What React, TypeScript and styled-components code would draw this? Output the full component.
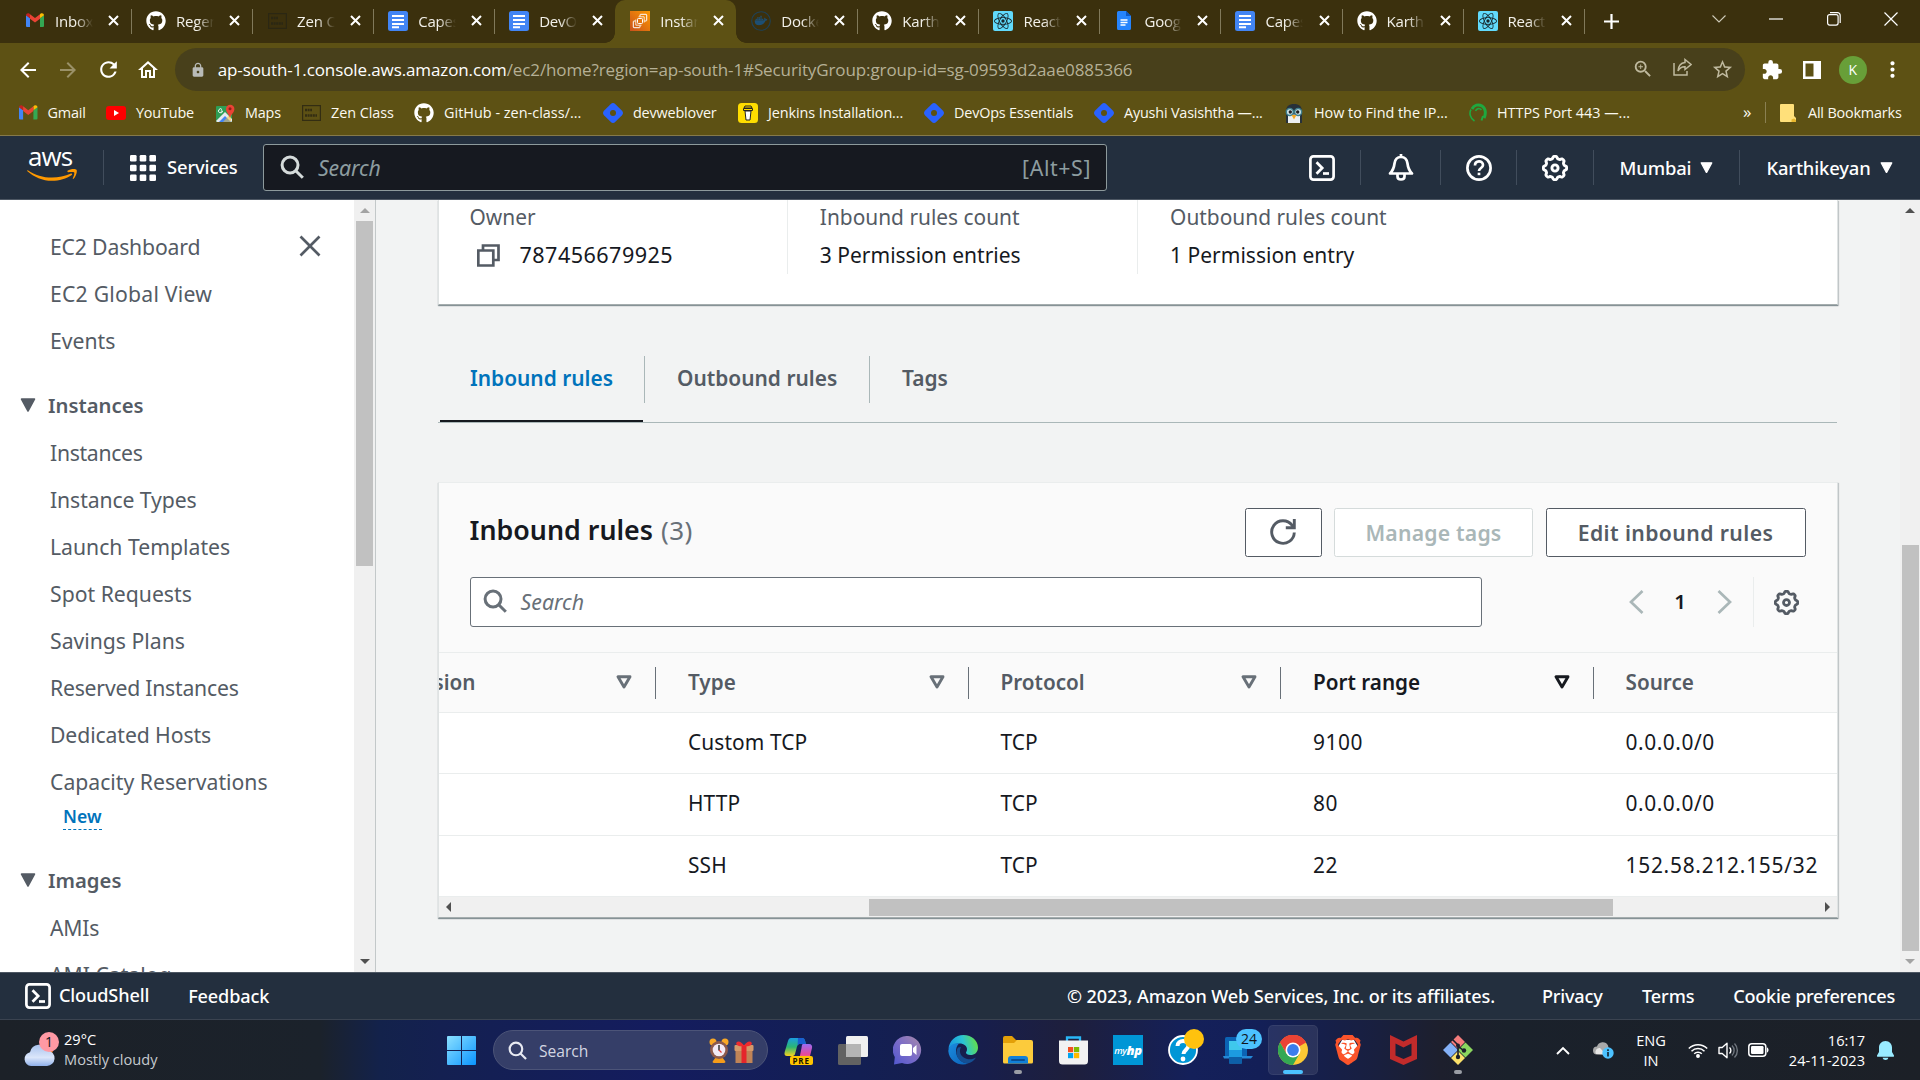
import React from 'react';
import styled, { createGlobalStyle, css } from 'styled-components';
import {
  MdArrowBack, MdArrowForward, MdRefresh, MdOutlineHome, MdLock, MdExtension, MdStarBorder,
  MdOutlineZoomIn, MdMoreVert,
} from 'react-icons/md';
import { FaGithub } from 'react-icons/fa';
import { SiDocker, SiReact, SiBrave } from 'react-icons/si';

const Global = createGlobalStyle`
  * { box-sizing: border-box; }
  body { margin: 0; overflow: hidden; }
  svg { display: block; flex: none; }
`;

const ember = '"Noto Sans", "Open Sans", sans-serif';
const segoe = '"Open Sans", "Noto Sans", sans-serif';

const Screen = styled.div`
  width: 1920px;
  height: 1080px;
  display: flex;
  flex-direction: column;
  overflow: hidden;
  white-space: nowrap;
  font-family: ${ember};
  color: #16191f;
`;

/* ---------- browser ---------- */

const TabStrip = styled.div`
  height: 43px;
  flex: none;
  background: #3b300d;
  display: flex;
  padding-left: 10px;
  font: 15px ${segoe};
  letter-spacing: -0.2px;
  color: #f3f1ea;
`;

const TabBox = styled.div<{ $active?: boolean; $noSep?: boolean }>`
  width: 121.05px;
  flex: none;
  display: flex;
  align-items: center;
  padding: 0 9px 2px 15px;
  position: relative;
  ${p => p.$active ? css`
    background: #5d5114;
    border-radius: 10px 10px 0 0;
    &::before, &::after {
      content: '';
      position: absolute;
      bottom: 0;
      width: 10px;
      height: 10px;
    }
    &::before { left: -10px; background: radial-gradient(circle at 0 0, transparent 9.5px, #5d5114 10px); }
    &::after { right: -10px; background: radial-gradient(circle at 100% 0, transparent 9.5px, #5d5114 10px); }
  ` : !p.$noSep && css`
    &::after {
      content: '';
      position: absolute;
      right: -1px;
      top: 9px;
      width: 1px;
      height: 25px;
      background: #81795a;
    }
  `}
`;

const TabIcon = styled.span`
  width: 20px;
  display: flex;
  justify-content: center;
`;

const TabTitle = styled.span`
  width: 38px;
  margin-left: 10px;
  overflow: hidden;
  mask-image: linear-gradient(90deg, #000 55%, transparent 100%);
`;

const TabClose = styled.span`
  margin-left: auto;
  display: flex;
  padding-right: 3px;
`;

const NewTab = styled.div`
  width: 54px;
  display: flex;
  align-items: center;
  justify-content: center;
  padding: 0 0 1px 1px;
`;

const WindowButtons = styled.div`
  margin-left: auto;
  display: flex;
  padding-bottom: 5px;
`;

const WindowButton = styled.div`
  width: 57.5px;
  display: flex;
  align-items: center;
  justify-content: center;
`;

const AddressRow = styled.div`
  height: 53px;
  flex: none;
  background: #5d5114;
  display: flex;
  align-items: center;
  padding-left: 8px;
  color: #fff;
`;

const ToolButton = styled.span<{ $w?: number; $dim?: boolean }>`
  width: ${p => p.$w ?? 40}px;
  display: flex;
  justify-content: center;
  color: ${p => (p.$dim ? '#9a9168' : '#fff')};
`;

const UrlBar = styled.div`
  width: 1570px;
  height: 43px;
  margin-left: 6.7px;
  border-radius: 22px;
  background: #48401b;
  display: flex;
  align-items: center;
  padding: 0 2px 0 15px;
  font: 17px ${segoe};
  letter-spacing: -0.11px;
  color: #b5b096;
`;

const Url = styled.span`
  margin-left: 12px;
  padding-bottom: 1px;
  b { font-weight: 400; color: #fff; }
`;

const UrlActions = styled.span`
  margin-left: auto;
  display: flex;
  color: #bfb99e;
`;

const Avatar = styled.span`
  width: 28px;
  height: 28px;
  border-radius: 50%;
  background: #689f38;
  display: flex;
  align-items: center;
  justify-content: center;
  font: 14px ${segoe};
`;

const BookmarkRow = styled.div`
  height: 40px;
  flex: none;
  background: #5d5114;
  border-bottom: 1px solid #85794a;
  display: flex;
  align-items: center;
  padding: 0 0 6px 19px;
  font: 14.4px ${segoe};
  letter-spacing: -0.18px;
  color: #fbf9f0;
`;

const Bookmark = styled.span<{ $w: number; $ls?: number }>`
  width: ${p => p.$w}px;
  flex: none;
  display: flex;
  align-items: center;
  gap: 10px;
  letter-spacing: ${p => p.$ls ?? -0.18}px;
`;

const BookmarksMore = styled.span`
  width: 24px;
  margin-left: 86px;
  font-size: 17px;
  padding-bottom: 3px;
`;

const AllBookmarks = styled.span`
  display: flex;
  align-items: center;
  gap: 12px;
  height: 21px;
  border-left: 1px solid #8a8052;
  padding-left: 14px;
  margin-left: -2px;
`;

/* ---------- AWS header ---------- */

const AwsHeader = styled.header`
  height: 64px;
  flex: none;
  background: #232f3e;
  border-bottom: 1px solid #4d5763;
  display: flex;
  align-items: center;
  padding-right: 1px;
  color: #fff;
  font-size: 18.4px;
  font-weight: 500;
  letter-spacing: -0.14px;
`;

const AwsLogo = styled.div`
  width: 103px;
  height: 46px;
  padding-left: 27px;
  display: flex;
  flex-direction: column;
  font: 500 26px/22px "Open Sans", sans-serif;
  letter-spacing: -0.9px;
  span { padding-left: 1px; height: 24px; margin-top: 0; }
`;

const HeaderSep = styled.span`
  width: 1px;
  height: 35px;
  background: #414d5c;
`;

const Services = styled.div`
  width: 159px;
  display: flex;
  align-items: center;
  padding-left: 26px;
  gap: 11px;
  span { padding-bottom: 2px; }
`;

const HeaderSearch = styled.div`
  width: 844px;
  height: 47px;
  border: 1px solid #8d9a9c;
  border-radius: 3px;
  background: #161920;
  display: flex;
  align-items: center;
  padding: 0 15px 1px 16px;
  gap: 14px;
  font-size: 21.3px;
  font-weight: 400;
  color: #8d9da0;
  i { flex: 1; }
  span { letter-spacing: 0.6px; }
`;

const HeaderItem = styled.div<{ $w: number; $first?: boolean }>`
  width: ${p => p.$w}px;
  flex: none;
  margin-left: ${p => (p.$first ? 'auto' : 0)};
  display: flex;
  align-items: center;
  justify-content: center;
  gap: 9px;
`;

/* ---------- body ---------- */

const Body = styled.div`
  height: 772px;
  flex: none;
  display: flex;
  background: #f2f3f3;
`;

const Sidebar = styled.nav`
  width: 354px;
  padding-top: 22.5px;
  background: #fff;
  overflow: hidden;
  font-size: 21.2px;
  color: #545b64;
`;

const NavItem = styled.div<{ $ls?: number }>`
  height: 47px;
  display: flex;
  align-items: center;
  justify-content: space-between;
  padding: 0 33px 0 50px;
  letter-spacing: ${p => p.$ls ?? 0}px;
`;

const NavHeading = styled.div`
  height: 47px;
  margin-top: 18px;
  padding-left: 20px;
  display: flex;
  align-items: center;
  gap: 12px;
  font-weight: 600;
  font-size: 20.3px;
`;

const NewTag = styled.div`
  height: 34px;
  padding-left: 63px;
  display: flex;
  align-items: flex-start;
  span {
    height: 25px;
    line-height: 23px;
    border-bottom: 1.5px dashed #0073bb;
    font-size: 17.6px;
    font-weight: 600;
    color: #0073bb;
  }
`;

const VScroll = styled.div<{ $w: number }>`
  width: ${p => p.$w}px;
  flex: none;
  background: #f0f0f0;
  display: flex;
  flex-direction: column;
  align-items: center;
`;

const ScrollCap = styled.div`
  height: 21px;
  flex: none;
  display: flex;
  align-items: center;
`;

const VThumb = styled.div<{ $top: number; $h: number }>`
  width: 17px;
  height: ${p => p.$h}px;
  margin-top: ${p => p.$top}px;
  margin-bottom: auto;
  background: #c1c1c1;
`;

const Main = styled.main`
  flex: 1;
  border-left: 1px solid #c3c8c9;
  padding-left: 61.5px;
`;

const Card = styled.section`
  width: 1400px;
  background: #fff;
  border: 1px solid #dfe3e3;
  border-top-color: #eaeded;
  border-bottom-color: #a5adae;
  box-shadow: 0 1px 1px rgba(0, 28, 36, 0.35), 1px 1px 1px rgba(0, 28, 36, 0.15);
`;

const DetailsCard = styled(Card)`
  height: 105px;
  border-top: 0;
  display: flex;
  padding-left: 31px;
`;

const Detail = styled.div<{ $last?: boolean }>`
  width: ${p => (p.$last ? 400 : 350.3)}px;
  font-size: 21px;
  color: #16191f;
  height: 74px;
  position: relative;
  ${p => !p.$last && css`
    &::after {
      content: '';
      position: absolute;
      right: 32px;
      top: 0;
      bottom: 0;
      width: 1px;
      background: #eaeded;
    }
  `}
`;

const DetailLabel = styled.div`
  height: 36px;
  line-height: 35px;
  color: #545b64;
  font-size: 20.9px;
`;

const DetailValue = styled.div<{ $wide?: boolean }>`
  height: 38px;
  line-height: 38px;
  display: flex;
  align-items: center;
  gap: 20px;
  padding-left: ${p => (p.$wide ? 7 : 0)}px;
  font-size: ${p => (p.$wide ? 21.6 : 21)}px;
  letter-spacing: ${p => (p.$wide ? 0.45 : 0)}px;
`;

const Tabs = styled.div`
  width: 1399px;
  height: 74px;
  margin-top: 44px;
  display: flex;
  border-bottom: 1px solid #aab7b8;
  font-size: 20.9px;
  font-weight: 600;
  color: #545b64;
`;

const AwsTab = styled.div<{ $w: number; $active?: boolean }>`
  width: ${p => p.$w}px;
  height: 74px;
  position: relative;
  display: flex;
  align-items: center;
  padding: 0 0 17px 32.5px;
  color: ${p => (p.$active ? '#0073bb' : 'inherit')};
  ${p => p.$active && css`
    &::before {
      content: '';
      position: absolute;
      left: 2px;
      right: 1px;
      bottom: 1px;
      height: 2px;
      background: #16191f;
    }
  `}
`;

const TabDivider = styled.span`
  width: 1px;
  height: 47px;
  margin-top: 7px;
  background: #aab7b8;
`;

const RulesCard = styled(Card)`
  height: 436px;
  margin-top: 59px;
  overflow: hidden;
`;

const RulesHead = styled.div`
  height: 170px;
  background: #fafafa;
  border-bottom: 1px solid #eaeded;
  padding: 25px 31px 0 31px;
`;

const TitleRow = styled.div`
  height: 49px;
  display: flex;
  align-items: center;
`;

const Title = styled.h2`
  margin: 0 auto 6px 0;
  font-size: 26.8px;
  font-weight: 600;
  span { font-weight: 400; color: #687078; margin-left: 1px; font-size: 26px; letter-spacing: 0.5px; }
`;

const Button = styled.button<{ $w: number; $off?: boolean }>`
  width: ${p => p.$w}px;
  height: 49px;
  margin-left: 12.5px;
  padding: 0 0 1px;
  display: flex;
  align-items: center;
  justify-content: center;
  background: #fff;
  border: 1.5px solid ${p => (p.$off ? '#d5dbdb' : '#545b64')};
  border-radius: 2.5px;
  color: ${p => (p.$off ? '#aab7b8' : '#545b64')};
  font: 600 21.2px ${ember};
  letter-spacing: ${p => (p.$off ? 0.2 : 0.4)}px;
`;

const FilterRow = styled.div`
  height: 50px;
  margin-top: 20px;
  display: flex;
  align-items: center;
`;

const FilterSearch = styled.div`
  width: 1012px;
  height: 50px;
  background: #fff;
  border: 1px solid #687078;
  border-radius: 3px;
  display: flex;
  align-items: center;
  gap: 14px;
  padding: 0 0 2px 12px;
  font-size: 21.3px;
  font-style: italic;
  color: #687078;
`;

const Pager = styled.div`
  margin-left: auto;
  height: 50px;
  display: flex;
  align-items: center;
  font-size: 20.5px;
  font-weight: 600;
`;

const PageNo = styled.span`
  width: 73px;
  padding-bottom: 2px;
  text-align: center;
`;

const GearSlot = styled.span`
  height: 50px;
  margin-left: 21px;
  padding: 0 7px 0 20px;
  display: flex;
  align-items: center;
  border-left: 1px solid #eaeded;
`;

const TableRow = styled.div<{ $head?: boolean }>`
  height: ${p => (p.$head ? 60 : 61.3)}px;
  display: grid;
  grid-template-columns: 217.5px repeat(3, 312.5px) 1fr;
  align-items: center;
  background: ${p => (p.$head ? '#fafafa' : '#fff')};
  border-bottom: 1px solid #eaeded;
  font-size: 20.9px;
  ${p => p.$head && css`font-size: 20.7px; font-weight: 600; color: #545b64;`}
  &:last-of-type { border-bottom: 0; }
`;

const Cell = styled.div<{ $sorted?: boolean; $ls?: number }>`
  display: flex;
  align-items: center;
  justify-content: space-between;
  padding: 0 23px 2px 32px;
  color: ${p => (p.$sorted ? '#16191f' : 'inherit')};
  letter-spacing: ${p => p.$ls ?? 0}px;
`;

const HeadCell = styled(Cell)`
  height: 32px;
  border-right: 1px solid #687078;
  &:first-child { padding-left: 0; }
  &:last-child { border-right: 0; }
`;

const CutLabel = styled.span`
  width: 37px;
  display: flex;
  justify-content: flex-end;
  overflow: hidden;
`;

const HScroll = styled.div`
  height: 21px;
  background: #f0f0f0;
  display: flex;
  align-items: center;
  padding: 0 7px;
`;

const HThumb = styled.div`
  width: 744px;
  height: 17px;
  margin: 0 auto 0 418.5px;
  background: #c1c1c1;
`;

const Footer = styled.footer`
  height: 48px;
  flex: none;
  background: #232f3e;
  border-top: 1px solid #4d5763;
  border-bottom: 1px solid #3a4350;
  display: flex;
  align-items: center;
  padding: 0 25px;
  color: #fff;
  font-size: 18.1px;
  font-weight: 500;
`;

const FooterItem = styled.span<{ $ml: number; $up?: boolean; $ls?: number }>`
  margin-left: ${p => p.$ml}px;
  padding-bottom: ${p => (p.$up ? 2 : 0)}px;
  letter-spacing: ${p => p.$ls ?? -0.13}px;
`;

const FooterRight = styled.span`
  margin-left: auto;
  display: flex;
`;

/* ---------- taskbar ---------- */

const Taskbar = styled.div`
  height: 60px;
  flex: none;
  display: flex;
  align-items: center;
  background: linear-gradient(90deg, #1c2128 0, #1b222b 320px, #13224b 380px, #142051 440px, #141c5e 660px,
    #131f53 860px, #171e4c 980px, #1e1f3c 1070px, #14205a 1190px, #131f57 1260px, #191f3e 1380px, #1d1f2d 1440px, #1a212b 1510px, #1c2027 1920px);
  color: #fff;
  font: 14.6px ${segoe};
`;

const Weather = styled.div`
  width: 433.5px;
  display: flex;
  align-items: center;
  padding-left: 24px;
  gap: 8px;
  line-height: 20px;
`;

const WeatherText = styled.div`
  margin-top: -3px;
  div + div { color: #c6cacf; }
`;

const BadgeHost = styled.span`
  position: relative;
  display: flex;
`;

const Badge = styled.span<{ $bg: string; $l: number; $t: number; $w: number; $fs?: number }>`
  position: absolute;
  left: ${p => p.$l}px;
  top: ${p => p.$t}px;
  width: ${p => p.$w}px;
  height: 20px;
  border-radius: 10px;
  background: ${p => p.$bg};
  color: #10151c;
  font-size: ${p => p.$fs ?? 13}px;
  line-height: 20px;
  text-align: center;
`;

const TaskSlot = styled.div<{ $active?: boolean }>`
  width: ${p => (p.$active ? 50 : 55)}px;
  margin: ${p => (p.$active ? '0 2.5px' : '0')};
  height: ${p => (p.$active ? 50 : 60)}px;
  flex: none;
  display: flex;
  align-items: center;
  justify-content: center;
  border-radius: 5px;
  background: ${p => (p.$active ? 'rgba(255,255,255,0.09)' : 'none')};
  box-shadow: ${p => (p.$active ? 'inset 0 0 0 1px rgba(255,255,255,0.06)' : 'none')};
  position: relative;
`;

const RunMark = styled.span<{ $on?: boolean }>`
  position: absolute;
  bottom: ${p => (p.$on ? 1 : 6)}px;
  left: 50%;
  transform: translateX(-50%);
  width: ${p => (p.$on ? 20 : 8)}px;
  height: 4px;
  border-radius: 2px;
  background: ${p => (p.$on ? '#4cc2ff' : '#9a9da5')};
`;

const TaskSearch = styled.div`
  width: 275px;
  height: 40px;
  margin: 0 2.5px 0 4.5px;
  border-radius: 20px;
  background: #353e68;
  border: 1px solid #4c5478;
  display: flex;
  align-items: center;
  padding: 0 12px 0 14px;
  gap: 12px;
  font-size: 15.6px;
  color: #d3d6e2;
  span { flex: 1; padding-top: 1px; }
`;

const SearchArt = styled.div`
  display: flex;
  gap: 5px;
  margin-right: 1px;
`;

const Tray = styled.div`
  margin-left: auto;
  padding-right: 15px;
  display: flex;
  align-items: center;
  line-height: 20px;
`;

const TraySlot = styled.div<{ $w: number; $right?: boolean }>`
  width: ${p => p.$w}px;
  display: flex;
  flex-direction: column;
  align-items: ${p => (p.$right ? 'flex-end' : 'center')};
  white-space: pre;
  padding-bottom: ${p => (p.$right ? 1 : 0)}px;
`;

const MyHp = styled.span`
  width: 30px;
  height: 30px;
  background: #0096d6;
  display: flex;
  align-items: center;
  justify-content: center;
  font: italic 600 9.5px "Open Sans", sans-serif;
  letter-spacing: -0.4px;
  color: #fff;
  b { font-size: 13px; }
`;

const PreTag = styled.span`
  position: absolute;
  left: 6px;
  top: 20px;
  width: 23px;
  height: 9px;
  border-radius: 2px;
  background: #ffc400;
  color: #1a1400;
  font: 700 8px/9px "Open Sans", sans-serif;
  letter-spacing: 0.8px;
  padding-left: 3px;
`;

/* ---------- drawings ---------- */

const TabCloseIcon = () => (
  <svg width="11" height="11" viewBox="0 0 11 11"><path d="M1 1l9 9M10 1l-9 9" stroke="#fff" strokeWidth="2" /></svg>
);
const PlusIcon = () => (
  <svg width="15" height="15" viewBox="0 0 15 15"><path d="M7.500 0v15M0 7.500h15" stroke="#fff" strokeWidth="2.200" /></svg>
);
const GmailIcon = ({ s = 18 }: { s?: number }) => (
  <svg width={s} height={s * 0.78} viewBox="0 0 18 14">
    <path d="M0 2v11a1 1 0 0 0 1 1h3V5.2z" fill="#4285f4" />
    <path d="M18 2v11a1 1 0 0 1-1 1h-3V5.2z" fill="#34a853" />
    <path d="M14 5.2V1.2l.7-.6C16 -.4 18 .4 18 2.2z" fill="#fbbc04" />
    <path d="M4 5.2V1.2l-.7-.6C2-.4 0 .4 0 2.2z" fill="#c5221f" />
    <path d="M4 1.2l5 3.8 5-3.8v4.6L9 9.6 4 5.8z" fill="#ea4335" />
  </svg>
);
const GithubIcon = () => <FaGithub size={20} color="#fff" />;
const DocsIcon = () => (
  <svg width="20" height="20" viewBox="0 0 20 20">
    <rect width="20" height="20" rx="2.5" fill="#4285f4" />
    <path d="M4 5h12M4 9h12M4 13h12M4 16.300h7" stroke="#fff" strokeWidth="1.9" />
  </svg>
);
const DocFileIcon = () => (
  <svg width="14" height="19" viewBox="0 0 14 19">
    <path d="M1.500 0H9l5 5v12.500A1.500 1.500 0 0 1 12.500 19h-11A1.500 1.500 0 0 1 0 17.500v-16A1.500 1.500 0 0 1 1.500 0z" fill="#2684fc" />
    <path d="M9 0l5 5H9z" fill="#0b57c4" />
    <path d="M3.500 9h7M3.500 11.500h7M3.500 14h5" stroke="#fff" strokeWidth="1.300" />
  </svg>
);
const ZenIcon = ({ c }: { c: string }) => (
  <svg width="19" height="16" viewBox="0 0 19 16">
    <rect x=".6" y=".6" width="17.800" height="14.800" fill="none" stroke={c} strokeWidth="1.200" />
    <path d="M3 5h7M3 10.500h12" stroke={c} strokeWidth="2.600" strokeDasharray="2 .6" />
  </svg>
);
const Ec2Icon = () => (
  <svg width="20" height="20" viewBox="0 0 20 20">
    <defs><linearGradient id="ec2" x1="0" y1="1" x2="1" y2="0"><stop stopColor="#c8511b" /><stop offset="1" stopColor="#f90" /></linearGradient></defs>
    <rect width="20" height="20" fill="url(#ec2)" />
    <g fill="none" stroke="#fff" strokeWidth="1">
      <rect x="7.500" y="7.500" width="5" height="5" rx=".8" />
      <path d="M5.500 10H4a.7.7 0 0 0-.7.700v5.300a.7.700 0 0 0 .7.700h5.300a.7.700 0 0 0 .7-.7v-1.500" />
      <path d="M10 5.500V4a.7.700 0 0 1 .7-.7H16a.7.700 0 0 1 .7.700v5.300a.7.700 0 0 1-.7.700h-1.500" />
      <path d="M5.800 8.500v5.700h5.700M8.500 5.800h5.700v5.700" strokeWidth=".8" />
    </g>
  </svg>
);
const ReactTile = () => (
  <svg width="20" height="20" viewBox="0 0 20 20">
    <rect width="20" height="20" rx="2" fill="#61dafb" />
    <SiReact x="1" y="1" size={18} color="#17262c" />
  </svg>
);
const DockerTab = () => (
  <svg width="20" height="20" viewBox="0 0 20 20">
    <circle cx="10" cy="10" r="9.300" fill="none" stroke="#1f4156" strokeWidth="1.100" />
    <SiDocker x="3.500" y="3" size={13} color="#1d4f74" />
  </svg>
);
const YoutubeIcon = () => (
  <svg width="20" height="14" viewBox="0 0 20 14"><rect width="20" height="14" rx="3" fill="#f00" /><path d="M8 4l5 3-5 3z" fill="#fff" /></svg>
);
const MapsIcon = () => (
  <svg width="19" height="18" viewBox="0 0 19 18">
    <rect x="0" y="2" width="16" height="16" rx="1" fill="#2e9e55" />
    <path d="M0 17L9 8l7 7v2a1 1 0 0 1-1 1H1z" fill="#e6e9ee" />
    <path d="M3 18l6-6 6 6z" fill="#4285f4" />
    <path d="M7 18L15 9v8l-1 1" fill="#fbc52c" opacity=".5" />
    <path d="M14 14c-.7-4-4-5-4-9a4.200 4.200 0 1 1 8.400 0c0 4-3.600 5-4.400 9z" fill="#ea4335" />
    <circle cx="14" cy="4.800" r="1.500" fill="#8f1f1a" />
    <path d="M6 5.500a2 2 0 1 0 .5 1.500H4.800" fill="none" stroke="#fff" strokeWidth="1" />
  </svg>
);
const HashnodeIcon = () => (
  <svg width="20" height="20" viewBox="0 0 20 20">
    <path d="M7.600 1.200a3.400 3.400 0 0 1 4.800 0l6.400 6.400a3.400 3.400 0 0 1 0 4.800l-6.400 6.400a3.400 3.400 0 0 1-4.800 0L1.200 12.400a3.400 3.400 0 0 1 0-4.800z" fill="#2962ff" />
    <circle cx="10" cy="10" r="3" fill="#5d5114" />
  </svg>
);
const CupIcon = () => (
  <svg width="20" height="20" viewBox="0 0 20 20">
    <rect width="20" height="20" rx="3.500" fill="#ffdd00" />
    <path d="M7 8h6l-1 9H8z" fill="#fff" stroke="#222" strokeWidth="1" />
    <path d="M7 3h6l1 2H6zM5.500 5.500h9V7.500h-9z" fill="#ffdd00" stroke="#222" strokeWidth="1" />
  </svg>
);
const PenguinIcon = () => (
  <svg width="20" height="20" viewBox="0 0 20 20">
    <path d="M2 20V9C2 3 5 1 10 1s8 2 8 8v11z" fill="#27313a" />
    <path d="M4 13c2-2 10-2 12 0v7H4z" fill="#eceff1" />
    <circle cx="5.800" cy="9" r="3.500" fill="#cfe3e8" stroke="#3f7f8c" strokeWidth="1.400" />
    <circle cx="14.200" cy="9" r="3.500" fill="#cfe3e8" stroke="#3f7f8c" strokeWidth="1.400" />
    <circle cx="6.300" cy="9" r="1.700" fill="#222" /><circle cx="13.700" cy="9" r="1.700" fill="#222" />
    <path d="M7.500 12h5L10 16.500z" fill="#f5a623" />
  </svg>
);
const SwirlIcon = () => (
  <svg width="18" height="19" viewBox="0 0 18 19" fill="none" stroke="#1fa83f">
    <path d="M5.500 18C1 15 0 10 2 6.500" strokeWidth="1.600" />
    <path d="M3 6C5 2 9.500.8 13 3c4 2.500 4 8 2 12" strokeWidth="3" />
    <path d="M6.500 8c1-2.500 4-3.500 6-1" strokeWidth="1.600" />
    <path d="M14 13l-1.500 4.500" strokeWidth="2" />
  </svg>
);
const FolderIcon = () => (
  <svg width="16" height="18" viewBox="0 0 16 18">
    <path d="M1 0h12a1 1 0 0 1 1 1v11l2 2v3a1 1 0 0 1-1 1H1a1 1 0 0 1-1-1V1a1 1 0 0 1 1-1z" fill="#ffe07a" />
    <path d="M11.500 18v-2.500l2.500-1 2 1.500v1a1 1 0 0 1-1 1z" fill="#e8b72d" />
  </svg>
);
const ShareIcon = () => (
  <svg width="19" height="18" viewBox="0 0 19 18" fill="none" stroke="#bfb99e" strokeWidth="1.500">
    <path d="M1 5v12h13v-4" /><path d="M12 1.500l6 5-6 5V8.800C8.500 8.600 6.500 10 5 13c.3-4.500 2.500-8 7-8.500z" />
  </svg>
);
const PanelIcon = () => (
  <svg width="18" height="18" viewBox="0 0 18 18"><path d="M0 0h18v18H0zM2.500 2.500v13h8v-13z" fill="#fff" fillRule="evenodd" /></svg>
);
const Smile = () => (
  <svg width="51" height="13" viewBox="0 0 51 13">
    <path d="M.8 1.200C8 6 16 8.600 25 8.600c6.500 0 13-1.500 19-4 1-.4 1.600.7.8 1.300C39.500 9.700 32 11.800 25 11.800 15.500 11.800 7 8 .4 2.200-.1 1.700.2.900.8 1.200z" fill="#ff9900" />
    <path d="M40.500 1.700C43.500-.2 48.500-.3 49.500.8c1 1.200-.3 6.500-3 9-.5.4-.9.100-.7-.4.8-2 2-5 1.400-5.900-.6-.8-4-.5-6-.2-.8 0-1-.9-.7-1.600z" fill="#ff9900" />
  </svg>
);
const GridIcon = () => (
  <svg width="26" height="26" viewBox="0 0 26 26" fill="#fff">
    {[0, 9.700, 19.400].map(y => [0, 9.700, 19.400].map(x => <rect key={x + '-' + y} x={x} y={y} width="6.600" height="6.600" rx="1.300" />))}
  </svg>
);
const SearchIcon = ({ s = 24, w = 2, c = 'currentColor' }: { s?: number; w?: number; c?: string }) => (
  <svg width={s} height={s} viewBox="0 0 16 16" fill="none" stroke={c} strokeWidth={w}>
    <circle cx="6.700" cy="6.700" r="5.300" /><path d="M10.500 10.500l4.700 4.700" />
  </svg>
);
const ShellIcon = () => (
  <svg width="26" height="26" viewBox="0 0 26 26" fill="none" stroke="#fff" strokeWidth="2.700">
    <rect x="1.400" y="1.400" width="23.200" height="23.200" rx="3" /><path d="M7.500 7.300l5.700 5.700-5.700 5.700" /><path d="M14 18.500h6" />
  </svg>
);
const BellIcon = () => (
  <svg width="26" height="27" viewBox="0 0 26 27" fill="none" stroke="#fff" strokeWidth="2.700" strokeLinejoin="round">
    <path d="M13 0v3M2 19.500C5 16.500 6 14 6.500 9.500 7 5.500 9.500 3 13 3s6 2.500 6.500 6.500C20 14 21 16.500 24 19.500z" /><path d="M9.500 20v2.500c0 4 7 4 7 0V20" />
  </svg>
);
const HelpIcon = () => (
  <svg width="26" height="26" viewBox="0 0 26 26" fill="none" stroke="#fff" strokeWidth="2.700">
    <circle cx="13" cy="13" r="11.600" /><path d="M9 10.500c0-5.300 8-5.300 8-.5 0 3-4 3-4 6" /><path d="M13 17.700v2.500" />
  </svg>
);
const gearPath = Array.from({ length: 96 }, (_, i) => {
  const a = (i / 96) * Math.PI * 2;
  const r = 10.6 + 1.1 * Math.tanh(2 * Math.cos(8 * a));
  return (i ? 'L' : 'M') + (13 + r * Math.cos(a)).toFixed(2) + ' ' + (13 + r * Math.sin(a)).toFixed(2);
}).join('') + 'Z';
const GearIcon = ({ c = '#fff', s = 26 }: { c?: string; s?: number }) => (
  <svg width={s} height={s} viewBox="0 0 26 26" fill="none" stroke={c} strokeWidth="2.900" strokeLinejoin="round">
    <path d={gearPath} /><circle cx="13" cy="13" r="3.100" />
  </svg>
);
const DownIcon = ({ s = 13, c = '#fff' }: { s?: number; c?: string }) => (
  <svg width={s} height={s * 0.88} viewBox="0 0 16 14"><path d="M1.500 1h13L8 13z" fill={c} stroke={c} strokeWidth="1.500" strokeLinejoin="round" /></svg>
);
const SortIcon = ({ c = '#687078' }: { c?: string }) => (
  <svg width="16" height="14" viewBox="0 0 16 14"><path d="M2 1.800h12L8 12z" fill="none" stroke={c} strokeWidth="2.900" strokeLinejoin="round" /></svg>
);
const CloseIcon = () => (
  <svg width="22" height="22" viewBox="0 0 22 22"><path d="M1.500 1.500l19 19M20.500 1.500l-19 19" stroke="#545b64" strokeWidth="2.700" /></svg>
);
const CopyIcon = () => (
  <svg width="23" height="23" viewBox="0 0 23 23" fill="none" stroke="#545b64" strokeWidth="2.700">
    <path d="M1.300 6.500h15v15h-15z" /><path d="M6 6V1.500h15.500V16H17" />
  </svg>
);
const RefreshIcon = () => (
  <svg width="26" height="26" viewBox="0 0 26 26" fill="none" stroke="#545b64" strokeWidth="2.900">
    <path d="M24.300 13.500A11.300 11.300 0 1 1 22 6.200L23.500 8.500" /><path d="M24.300 0v8.700h-8.500" />
  </svg>
);
const Angle = ({ flip }: { flip?: boolean }) => (
  <svg width="15" height="24" viewBox="0 0 15 24">
    <path d={flip ? 'M1.500 1L13 12 1.500 23' : 'M13.500 1L2 12l11.500 11'} fill="none" stroke="#aab7b8" strokeWidth="2.700" />
  </svg>
);
const tri = { up: 'M0 6L6 0l6 6z', down: 'M0 0h12L6 6z', left: 'M6 0v12L0 6z', right: 'M0 0v12l6-6z' };
const ScrollArrow = ({ dir, c = '#505050' }: { dir: keyof typeof tri; c?: string }) => {
  const tall = dir === 'left' || dir === 'right';
  return <svg width={tall ? 5 : 10} height={tall ? 10 : 5} viewBox={tall ? '0 0 6 12' : '0 0 12 6'}><path d={tri[dir]} fill={c} /></svg>;
};

const CloudIcon = () => (
  <svg width="32" height="34" viewBox="0 0 32 34">
    <defs><linearGradient id="cl" x1="0" y1="0" x2="0" y2="1"><stop stopColor="#a9c3ee" /><stop offset=".6" stopColor="#dbe6fa" /><stop offset="1" stopColor="#8fb0ea" /></linearGradient></defs>
    <circle cx="23" cy="17" r="6" fill="#f58220" />
    <path d="M7 33a7 7 0 0 1-1-13.800A9.500 9.500 0 0 1 24 17.500 7.800 7.800 0 0 1 23 33z" fill="url(#cl)" />
  </svg>
);
const WindowsIcon = () => (
  <svg width="29" height="29" viewBox="0 0 29 29">
    <defs><linearGradient id="wn" x1="0" y1="0" x2="1" y2="1"><stop stopColor="#8be0ff" /><stop offset="1" stopColor="#0a94ff" /></linearGradient></defs>
    <path d="M1 0h13v14H0V1a1 1 0 0 1 1-1zM15 0h13a1 1 0 0 1 1 1v13H15zM0 15h14v14H1a1 1 0 0 1-1-1zM15 15h14v13a1 1 0 0 1-1 1H15z" fill="url(#wn)" />
  </svg>
);
const AlarmIcon = () => (
  <svg width="20" height="25" viewBox="0 0 20 25">
    <circle cx="4" cy="4" r="3.500" fill="#f9a825" /><circle cx="16" cy="4" r="3.500" fill="#f9a825" />
    <path d="M4 23l3-4h6l3 4c1 1 0 2-1 2H5c-1 0-2-1-1-2z" fill="#f59c1a" />
    <circle cx="10" cy="12" r="9" fill="#8d5a4c" /><circle cx="10" cy="12" r="6.300" fill="#f3eaf5" />
    <path d="M10 7v5.500" fill="none" stroke="#333" strokeWidth="1.500" /><path d="M10 12l2.500 2.500" stroke="#e53935" strokeWidth="1.200" />
  </svg>
);
const GiftIcon = () => (
  <svg width="20" height="25" viewBox="0 0 20 25">
    <rect x="1.500" y="10" width="17" height="15" fill="#c08457" /><rect x=".5" y="7" width="19" height="6" rx="1" fill="#d49a6a" />
    <rect x="7.500" y="7" width="5" height="18" fill="#e5262b" />
    <path d="M10 8C5 9 1 7 2.500 4.500S8 4 10 7.500C12 4 16 2 17.500 4.500S15 9 10 8z" fill="#ef2b2d" />
  </svg>
);
const CopilotIcon = () => (
  <svg width="29" height="29" viewBox="0 0 29 29">
    <defs>
      <linearGradient id="ca" x1="0" y1="0" x2="0" y2="1"><stop stopColor="#1b9de2" /><stop offset=".5" stopColor="#2bb673" /><stop offset="1" stopColor="#f6d21f" /></linearGradient>
      <linearGradient id="cb" x1="0" y1="0" x2="0" y2="1"><stop stopColor="#9b6bf2" /><stop offset=".6" stopColor="#e64a9b" /><stop offset="1" stopColor="#f58b4c" /></linearGradient>
    </defs>
    <path d="M7 2h11c3 0 3 3 4 6h-6c-2 0-2.500 1-3.500 4.500L11 18c-.5 1.500-1.500 2-3 2H3c-2 0-3-1.500-2.300-4L4 5c.6-2 1.500-3 3-3z" fill="url(#ca)" />
    <path d="M14 2h4c3 0 3 3 4 6h-6c-1.500 0-2 .5-2.500 2z" fill="#1a5fd0" />
    <path d="M19 8h6c2.500 0 3.500 2 3 4l-2.500 10c-.5 2-1.500 3-3 3H12c2 0 3-1 3.500-3l2-10C18 9 18 8 19 8z" fill="url(#cb)" />
  </svg>
);
const TaskViewIcon = () => (
  <svg width="30" height="30" viewBox="0 0 30 30">
    <rect x="0" y="9" width="23" height="21" rx="1.500" fill="#626262" /><rect x="8" y="1" width="22" height="21" rx="1.500" fill="#f0f0f0" />
    <path d="M8 9h15v13H8z" fill="#b4b4b4" />
  </svg>
);
const ChatIcon = () => (
  <svg width="30" height="30" viewBox="0 0 30 30">
    <defs><linearGradient id="ch" x1="1" y1="0" x2="0" y2="1"><stop stopColor="#a98aa8" /><stop offset=".5" stopColor="#7b6cc8" /><stop offset="1" stopColor="#5157cf" /></linearGradient></defs>
    <path d="M15 1a14 14 0 1 1-6 27L1 29.500l.8-7.500A14 14 0 0 1 15 1z" fill="url(#ch)" />
    <rect x="7" y="9" width="12" height="12" rx="2" fill="#fff" /><path d="M20 13l3.500-3v10L20 17z" fill="#fff" />
  </svg>
);
const EdgeIcon = () => (
  <svg width="30" height="30" viewBox="0 0 30 30">
    <defs>
      <linearGradient id="ea" x1="0" y1=".5" x2="1" y2=".3"><stop stopColor="#1795e0" /><stop offset=".5" stopColor="#2ac3d6" /><stop offset="1" stopColor="#67e03f" /></linearGradient>
      <linearGradient id="eb" x1="0" y1="0" x2="1" y2="1"><stop stopColor="#1b8ce0" /><stop offset="1" stopColor="#0b62b8" /></linearGradient>
    </defs>
    <path d="M.5 14C1 6 7.500 0 15.500 0 24 0 30 6 30 12.500c0 5-3.500 7.500-7.500 7.500-3 0-4.500-1-4.500-2.200 0-1 1-1.500 1-3.800 0-3-3-5.500-7.500-5.500-5 0-9 2.500-11 5.500z" fill="url(#ea)" />
    <path d="M.3 16C1 10 6 7.800 11.500 8.500c-2.500 1-3.500 5-3.500 7.500 0 6 5 12 12 12.500C13 32 1 27 .3 16z" fill="url(#eb)" />
    <path d="M10 12.500c-4 6 0 15 9.500 16 3.500-.5 6.500-3 8.500-6-4 2.500-9 2.500-13-.5-3-2.500-4-6-2-10z" fill="#154f93" />
  </svg>
);
const ExplorerIcon = () => (
  <svg width="30" height="28" viewBox="0 0 30 28">
    <path d="M0 2a2 2 0 0 1 2-2h7l4 4h15v6H0z" fill="#e3a008" />
    <path d="M0 7h11l3-3h14a2 2 0 0 1 2 2v20a1.500 1.500 0 0 1-1.500 1.500h-27A1.500 1.500 0 0 1 0 26z" fill="#fccb3c" />
    <path d="M5 27.500V23a3 3 0 0 1 3-3h14a3 3 0 0 1 3 3v4.500z" fill="#1180d8" /><rect x="8" y="23" width="14" height="2" rx="1" fill="#0a4f93" />
  </svg>
);
const StoreIcon = () => (
  <svg width="29" height="30" viewBox="0 0 29 30">
    <path d="M8 7V2.500h13V7" fill="none" stroke="#29b6f6" strokeWidth="2.300" />
    <path d="M0 5.500h29V26a3.500 3.500 0 0 1-3.500 3.500h-22A3.500 3.500 0 0 1 0 26z" fill="#f2f2f2" />
    <path d="M9 12h5.200v5.200H9z" fill="#f25022" /><path d="M15 12h5.200v5.200H15z" fill="#7fba00" />
    <path d="M9 18h5.200v5.200H9z" fill="#00a4ef" /><path d="M15 18h5.200v5.200H15z" fill="#ffb900" />
  </svg>
);
const HpHelpIcon = () => (
  <svg width="30" height="30" viewBox="0 0 30 30">
    <circle cx="15" cy="15" r="14" fill="#0096d6" stroke="#fff" strokeWidth="1.800" />
    <path d="M9.500 11c0-6.500 11-6.500 11-.5 0 4-5 4.500-5 8.500" fill="none" stroke="#fff" strokeWidth="4" /><circle cx="15" cy="24" r="2.400" fill="#fff" />
  </svg>
);
const PhoneLinkIcon = () => (
  <svg width="30" height="27" viewBox="0 0 30 27">
    <rect x="2" y="0" width="22" height="20" rx="1.500" fill="#0b63b4" /><path d="M0 19h30l-2 2.500H1z" fill="#2489d8" />
    <rect x="6" y="4" width="13" height="22.500" rx="1" fill="#1c9be0" /><path d="M6 4h13v9H6z" fill="#3fc8ec" /><path d="M6 20h13v6.500H6z" fill="#0d5fa8" />
  </svg>
);
const ChromeIcon = () => (
  <svg width="30" height="30" viewBox="0 0 30 30">
    <circle cx="15" cy="15" r="15" fill="#fcc934" />
    <path d="M15 15L2 7.500A15 15 0 0 1 28 7.500z" fill="#ea4335" /><path d="M15 7.500h13A15 15 0 0 0 2 7.500L8.500 18.800z" fill="#ea4335" />
    <path d="M2 7.500a15 15 0 0 0 13 22.500l6.500-11.200-13 0z" fill="#34a853" />
    <circle cx="15" cy="15" r="7.500" fill="#fff" /><circle cx="15" cy="15" r="5.900" fill="#3b7ded" />
  </svg>
);
const BraveIcon = () => (
  <svg width="26" height="30" viewBox="0 0 26 30">
    <path d="M7 5h12l4 7-4 11-6 4-6-4L3 12z" fill="#fff" />
    <SiBrave x="-2" y="0" size={30} color="#fb542b" />
  </svg>
);
const McAfeeIcon = () => (
  <svg width="27" height="30" viewBox="0 0 27 30">
    <path d="M0 0l13.500 6.500L27 0v24l-13.500 6L0 24zM5.500 8.500v12l8 3.500 8-3.500v-12l-8 4z" fill="#c22b2b" fillRule="evenodd" />
  </svg>
);
const GitIcon = () => (
  <svg width="30" height="30" viewBox="0 0 30 30">
    <path d="M15 0l7 7-7 7-7-7z" fill="#f47c7c" /><path d="M22.500 7.500l7.500 7.500-7.500 7.500L15 15z" fill="#8bd65f" />
    <path d="M7.500 7.500L15 15l-7.500 7.500L0 15z" fill="#84b1f7" /><path d="M15 16l7 7-7 7-7-7z" fill="#fbe16a" />
    <path d="M9.500 4.500l5.500 5.500v12M15 11l6 5" fill="none" stroke="#1b1f2b" strokeWidth="1.600" />
    <circle cx="15" cy="10.500" r="2" fill="#1b1f2b" /><circle cx="21" cy="15.500" r="2.200" fill="#1b1f2b" /><circle cx="15" cy="22" r="2.200" fill="#1b1f2b" />
  </svg>
);
const OneDriveIcon = () => (
  <svg width="21" height="18" viewBox="0 0 21 18">
    <path d="M4 13.500a4 4 0 0 1 0-8A6 6 0 0 1 15 4.500l2 9z" fill="#a9a9a9" /><path d="M3 13a4 4 0 0 1 4-6l6 6.500z" fill="#e6e6e6" />
    <circle cx="15" cy="12" r="5.700" fill="#4cc2ff" /><path d="M15 8.300v1.800M15 11v4.500" stroke="#10202c" strokeWidth="1.600" />
  </svg>
);
const WifiIcon = () => (
  <svg width="20" height="15" viewBox="0 0 20 15" fill="none" stroke="#fff" strokeWidth="1.500">
    <path d="M.8 5.500a13 13 0 0 1 18.400 0M3.500 8.200a9.200 9.200 0 0 1 13 0M6.200 10.800a5.400 5.400 0 0 1 7.600 0" /><circle cx="10" cy="13" r="1.200" fill="#fff" />
  </svg>
);
const SpeakerIcon = () => (
  <svg width="21" height="17" viewBox="0 0 21 17" fill="none" stroke="#fff" strokeWidth="1.400">
    <path d="M1 5.500h3.200L9 1.300v14.400l-4.800-4.200H1z" strokeLinejoin="round" /><path d="M11.500 5.500a4 4 0 0 1 0 6" />
    <path d="M14 3.500a7 7 0 0 1 0 10M16.500 1.500a10 10 0 0 1 0 14" stroke="#6f757d" />
  </svg>
);
const BatteryIcon = () => (
  <svg width="21" height="14" viewBox="0 0 21 14">
    <rect x=".8" y=".8" width="17" height="12.400" rx="3" fill="none" stroke="#fff" strokeWidth="1.500" /><rect x="3" y="3" width="12.500" height="8" rx="1.200" fill="#fff" />
    <path d="M19 4.500c2 .5 2 4.500 0 5z" fill="#fff" />
  </svg>
);
const TrayBell = () => (
  <svg width="17" height="19" viewBox="0 0 17 19" fill="#99ebff">
    <path d="M8.500 0c4 0 6.500 3 6.500 6.500V11l2 3.500c.2.800-.2 1.200-1 1.200H1c-.8 0-1.200-.4-1-1.200L2 11V6.500C2 3 4.500 0 8.500 0z" /><path d="M5.700 16.700h5.600c-.3 3-5.300 3-5.600 0z" />
  </svg>
);

/* ---------- data ---------- */

const tabs: { icon: React.ReactNode; title: string; active?: boolean; noSep?: boolean }[] = [
  { icon: <GmailIcon />, title: 'Inbox (' },
  { icon: <GithubIcon />, title: 'Regene' },
  { icon: <ZenIcon c="#2b2713" />, title: 'Zen Cla' },
  { icon: <DocsIcon />, title: 'Capest' },
  { icon: <DocsIcon />, title: 'DevOp', noSep: true },
  { icon: <Ec2Icon />, title: 'Instan', active: true },
  { icon: <DockerTab />, title: 'Docker' },
  { icon: <GithubIcon />, title: 'Karthik' },
  { icon: <ReactTile />, title: 'React A' },
  { icon: <DocFileIcon />, title: 'Google' },
  { icon: <DocsIcon />, title: 'Capest' },
  { icon: <GithubIcon />, title: 'Karthik' },
  { icon: <ReactTile />, title: 'React A' },
];

const bookmarks: { icon: React.ReactNode; label: string; w: number; ls?: number }[] = [
  { icon: <GmailIcon s={18.5} />, label: 'Gmail', w: 87 },
  { icon: <YoutubeIcon />, label: 'YouTube', w: 110 },
  { icon: <MapsIcon />, label: 'Maps', w: 86 },
  { icon: <ZenIcon c="#332d12" />, label: 'Zen Class', w: 112, ls: -0.05 },
  { icon: <GithubIcon />, label: 'GitHub - zen-class/...', w: 189, ls: 0.03 },
  { icon: <HashnodeIcon />, label: 'devweblover', w: 135 },
  { icon: <CupIcon />, label: 'Jenkins Installation...', w: 186, ls: -0.08 },
  { icon: <HashnodeIcon />, label: 'DevOps Essentials', w: 170 },
  { icon: <HashnodeIcon />, label: 'Ayushi Vasishtha —...', w: 190 },
  { icon: <PenguinIcon />, label: 'How to Find the IP...', w: 185, ls: -0.01 },
  { icon: <SwirlIcon />, label: 'HTTPS Port 443 —...', w: 188, ls: 0 },
];

const instanceLinks: [string, number?][] = [
  ['Instances', -0.3], ['Instance Types', -0.1], ['Launch Templates'], ['Spot Requests'],
  ['Savings Plans'], ['Reserved Instances', -0.22], ['Dedicated Hosts', -0.1], ['Capacity Reservations'],
];

const rules = [
  ['Custom TCP', 'TCP', '9100', '0.0.0.0/0'],
  ['HTTP', 'TCP', '80', '0.0.0.0/0'],
  ['SSH', 'TCP', '22', '152.58.212.155/32'],
];

const cellSpacing = (v: string) => (v.length > 12 ? 0.75 : /^\d/.test(v) ? 0.55 : 0.1);

/* ---------- sections ---------- */

const Browser = () => (
  <>
    <TabStrip>
      {tabs.map((t, i) => (
        <TabBox key={i} $active={t.active} $noSep={t.noSep}>
          <TabIcon>{t.icon}</TabIcon>
          <TabTitle>{t.title}</TabTitle>
          <TabClose><TabCloseIcon /></TabClose>
        </TabBox>
      ))}
      <NewTab><PlusIcon /></NewTab>
      <WindowButtons>
        <WindowButton><svg width="14" height="8" viewBox="0 0 14 8"><path d="M.5.5L7 7 13.500.5" fill="none" stroke="#cfcbb9" strokeWidth="1.100" /></svg></WindowButton>
        <WindowButton><svg width="14" height="2"><path d="M0 1h14" stroke="#fff" strokeWidth="1.200" /></svg></WindowButton>
        <WindowButton>
          <svg width="14" height="14" viewBox="0 0 14 14" fill="none" stroke="#fff" strokeWidth="1.200"><rect x=".6" y="2.600" width="10.500" height="10.500" rx="2" /><path d="M3 .7h7.500a2.700 2.700 0 0 1 2.700 2.700V11" /></svg>
        </WindowButton>
        <WindowButton><svg width="14" height="14" viewBox="0 0 14 14"><path d="M.5.5l13 13M13.500.5l-13 13" stroke="#fff" strokeWidth="1.200" /></svg></WindowButton>
      </WindowButtons>
    </TabStrip>
    <AddressRow>
      <ToolButton><MdArrowBack size={24} /></ToolButton>
      <ToolButton $dim><MdArrowForward size={24} /></ToolButton>
      <ToolButton><MdRefresh size={25} /></ToolButton>
      <ToolButton><MdOutlineHome size={24} /></ToolButton>
      <UrlBar>
        <MdLock size={16} color="#b9bbb8" />
        <Url><b>ap-south-1.console.aws.amazon.com</b>/ec2/home?region=ap-south-1#SecurityGroup:group-id=sg-09593d2aae0885366</Url>
        <UrlActions>
          <ToolButton $dim><MdOutlineZoomIn size={22} color="#bfb99e" /></ToolButton>
          <ToolButton $dim><ShareIcon /></ToolButton>
          <ToolButton $dim><MdStarBorder size={23} color="#bfb99e" /></ToolButton>
        </UrlActions>
      </UrlBar>
      <ToolButton $w={55}><MdExtension size={22} /></ToolButton>
      <ToolButton $w={24}><PanelIcon /></ToolButton>
      <ToolButton $w={58}><Avatar>K</Avatar></ToolButton>
      <ToolButton $w={22}><MdMoreVert size={25} /></ToolButton>
    </AddressRow>
    <BookmarkRow>
      {bookmarks.map((b, i) => <Bookmark key={i} $w={b.w} $ls={b.ls}>{b.icon}{b.label}</Bookmark>)}
      <BookmarksMore>»</BookmarksMore>
      <AllBookmarks><FolderIcon />All Bookmarks</AllBookmarks>
    </BookmarkRow>
  </>
);

const Header = () => (
  <AwsHeader>
    <AwsLogo><span>aws</span><Smile /></AwsLogo>
    <HeaderSep />
    <Services><GridIcon /><span>Services</span></Services>
    <HeaderSearch><SearchIcon s={24} c="#d5dbdb" /><i>Search</i><span>[Alt+S]</span></HeaderSearch>
    <HeaderItem $w={77} $first><ShellIcon /></HeaderItem><HeaderSep />
    <HeaderItem $w={79}><BellIcon /></HeaderItem><HeaderSep />
    <HeaderItem $w={75}><HelpIcon /></HeaderItem><HeaderSep />
    <HeaderItem $w={76}><GearIcon /></HeaderItem><HeaderSep />
    <HeaderItem $w={145}>Mumbai<DownIcon /></HeaderItem><HeaderSep />
    <HeaderItem $w={179}>Karthikeyan<DownIcon /></HeaderItem>
  </AwsHeader>
);

const SideNav = () => (
  <>
    <Sidebar>
      <NavItem $ls={-0.17}>EC2 Dashboard<CloseIcon /></NavItem>
      <NavItem $ls={0.22}>EC2 Global View</NavItem>
      <NavItem>Events</NavItem>
      <NavHeading><DownIcon s={16} c="#545b64" />Instances</NavHeading>
      {instanceLinks.map(([l, ls]) => <NavItem key={l} $ls={ls}>{l}</NavItem>)}
      <NewTag><span>New</span></NewTag>
      <NavHeading><DownIcon s={16} c="#545b64" />Images</NavHeading>
      <NavItem $ls={-0.2}>AMIs</NavItem>
      <NavItem>AMI Catalog</NavItem>
    </Sidebar>
    <VScroll $w={21}>
      <ScrollCap><ScrollArrow dir="up" c="#a3a3a3" /></ScrollCap>
      <VThumb $top={0} $h={345} />
      <ScrollCap><ScrollArrow dir="down" /></ScrollCap>
    </VScroll>
  </>
);

const Rules = () => (
  <RulesCard>
    <RulesHead>
      <TitleRow>
        <Title>Inbound rules <span>(3)</span></Title>
        <Button $w={77}><RefreshIcon /></Button>
        <Button $w={199} $off>Manage tags</Button>
        <Button $w={260}>Edit inbound rules</Button>
      </TitleRow>
      <FilterRow>
        <FilterSearch><SearchIcon s={24} c="#687078" />Search</FilterSearch>
        <Pager>
          <Angle /><PageNo>1</PageNo><Angle flip />
          <GearSlot><GearIcon c="#545b64" s={25} /></GearSlot>
        </Pager>
      </FilterRow>
    </RulesHead>
    <TableRow $head>
      <HeadCell><CutLabel>IP version</CutLabel><SortIcon /></HeadCell>
      <HeadCell>Type<SortIcon /></HeadCell>
      <HeadCell>Protocol<SortIcon /></HeadCell>
      <HeadCell $sorted>Port range<SortIcon c="#16191f" /></HeadCell>
      <HeadCell>Source</HeadCell>
    </TableRow>
    {rules.map(r => (
      <TableRow key={r[0]}>
        <Cell />
        {r.map((v, i) => <Cell key={i} $ls={cellSpacing(v)}>{v}</Cell>)}
      </TableRow>
    ))}
    <HScroll><ScrollArrow dir="left" /><HThumb /><ScrollArrow dir="right" /></HScroll>
  </RulesCard>
);

const Windows = () => (
  <Taskbar>
    <Weather>
      <BadgeHost><CloudIcon /><Badge $bg="#ff99a4" $l={15} $t={-1} $w={20} $fs={14}>1</Badge></BadgeHost>
      <WeatherText><div>29°C</div><div>Mostly cloudy</div></WeatherText>
    </Weather>
    <TaskSlot><WindowsIcon /></TaskSlot>
    <TaskSearch><SearchIcon s={19} w={1.8} c="#e8eaf2" /><span>Search</span><SearchArt><AlarmIcon /><GiftIcon /></SearchArt></TaskSearch>
    <TaskSlot><BadgeHost><CopilotIcon /><PreTag>PRE</PreTag></BadgeHost></TaskSlot>
    <TaskSlot><TaskViewIcon /></TaskSlot>
    <TaskSlot><ChatIcon /></TaskSlot>
    <TaskSlot><EdgeIcon /></TaskSlot>
    <TaskSlot><ExplorerIcon /><RunMark /></TaskSlot>
    <TaskSlot><StoreIcon /></TaskSlot>
    <TaskSlot><MyHp>my<b>hp</b></MyHp></TaskSlot>
    <TaskSlot><BadgeHost><HpHelpIcon /><Badge $bg="#ffc20e" $l={16} $t={-6} $w={20} /></BadgeHost></TaskSlot>
    <TaskSlot><BadgeHost><PhoneLinkIcon /><Badge $bg="#4cc2ff" $l={13} $t={-8} $w={26} $fs={14}>24</Badge></BadgeHost></TaskSlot>
    <TaskSlot $active><ChromeIcon /><RunMark $on /></TaskSlot>
    <TaskSlot><BraveIcon /></TaskSlot>
    <TaskSlot><McAfeeIcon /></TaskSlot>
    <TaskSlot><GitIcon /><RunMark /></TaskSlot>
    <Tray>
      <TraySlot $w={40}><svg width="14" height="9" viewBox="0 0 14 9"><path d="M1 8l6-6 6 6" fill="none" stroke="#fff" strokeWidth="1.900" /></svg></TraySlot>
      <TraySlot $w={40}><OneDriveIcon /></TraySlot>
      <TraySlot $w={56}><span>ENG</span><span>IN</span></TraySlot>
      <TraySlot $w={38}><WifiIcon /></TraySlot>
      <TraySlot $w={22}><SpeakerIcon /></TraySlot>
      <TraySlot $w={38}><BatteryIcon /></TraySlot>
      <TraySlot $w={88} $right><span>16:17</span><span>24-11-2023</span></TraySlot>
      <TraySlot $w={40}><TrayBell /></TraySlot>
    </Tray>
  </Taskbar>
);

export default function App() {
  return (
    <Screen>
      <Global />
      <Browser />
      <Header />
      <Body>
        <SideNav />
        <Main>
          <DetailsCard>
            <Detail>
              <DetailLabel>Owner</DetailLabel>
              <DetailValue $wide><CopyIcon />787456679925</DetailValue>
            </Detail>
            <Detail>
              <DetailLabel>Inbound rules count</DetailLabel>
              <DetailValue>3 Permission entries</DetailValue>
            </Detail>
            <Detail $last>
              <DetailLabel>Outbound rules count</DetailLabel>
              <DetailValue>1 Permission entry</DetailValue>
            </Detail>
          </DetailsCard>
          <Tabs>
            <AwsTab $w={206} $active>Inbound rules</AwsTab><TabDivider />
            <AwsTab $w={224}>Outbound rules</AwsTab><TabDivider />
            <AwsTab $w={150}>Tags</AwsTab>
          </Tabs>
          <Rules />
        </Main>
        <VScroll $w={20}>
          <ScrollCap><ScrollArrow dir="up" /></ScrollCap>
          <VThumb $top={324} $h={407} />
          <ScrollCap><ScrollArrow dir="down" c="#a3a3a3" /></ScrollCap>
        </VScroll>
      </Body>
      <Footer>
        <ShellIcon />
        <FooterItem $ml={8} $up>CloudShell</FooterItem>
        <FooterItem $ml={39}>Feedback</FooterItem>
        <FooterRight>
          <FooterItem $ml={0} $ls={-0.1}>© 2023, Amazon Web Services, Inc. or its affiliates.</FooterItem>
          <FooterItem $ml={47} $ls={-0.18}>Privacy</FooterItem>
          <FooterItem $ml={39.5}>Terms</FooterItem>
          <FooterItem $ml={39} $ls={-0.27}>Cookie preferences</FooterItem>
        </FooterRight>
      </Footer>
      <Windows />
    </Screen>
  );
}
